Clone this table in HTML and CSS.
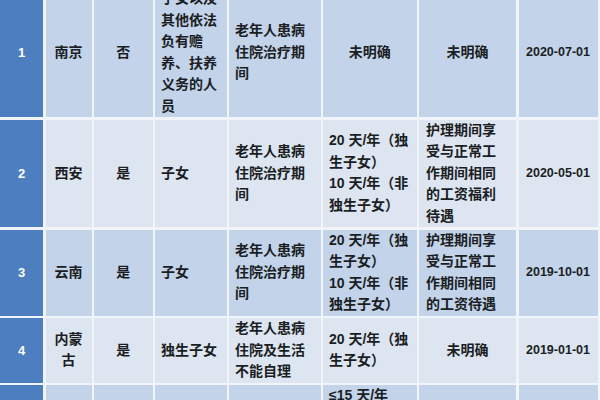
FILE: index.html
```html
<!DOCTYPE html>
<html lang="zh-CN">
<head>
<meta charset="utf-8">
<title>各地护理假规定</title>
<link rel="stylesheet" href="styles.css">
</head>
<body>
<div class="sheet">
  <div class="table">
    <div class="row odd">
      <div class="cell num">1</div>
      <div class="cell center">南京</div>
      <div class="cell center">否</div>
      <div class="cell left">子女以及<br>其他依法<br>负有赡<br>养、扶养<br>义务的人<br>员</div>
      <div class="cell left">老年人患病<br>住院治疗期<br>间</div>
      <div class="cell center">未明确</div>
      <div class="cell center">未明确</div>
      <div class="cell center date">2020-07-01</div>
    </div>
    <div class="row even">
      <div class="cell num">2</div>
      <div class="cell center">西安</div>
      <div class="cell center">是</div>
      <div class="cell left">子女</div>
      <div class="cell left">老年人患病<br>住院治疗期<br>间</div>
      <div class="cell left">20 天/年（独<br>生子女）<br>10 天/年（非<br>独生子女）</div>
      <div class="cell left wide">护理期间享<br>受与正常工<br>作期间相同<br>的工资福利<br>待遇</div>
      <div class="cell center date">2020-05-01</div>
    </div>
    <div class="row odd">
      <div class="cell num">3</div>
      <div class="cell center">云南</div>
      <div class="cell center">是</div>
      <div class="cell left">子女</div>
      <div class="cell left">老年人患病<br>住院治疗期<br>间</div>
      <div class="cell left">20 天/年（独<br>生子女）<br>10 天/年（非<br>独生子女）</div>
      <div class="cell left wide">护理期间享<br>受与正常工<br>作期间相同<br>的工资待遇</div>
      <div class="cell center date">2019-10-01</div>
    </div>
    <div class="row even">
      <div class="cell num">4</div>
      <div class="cell center">内蒙<br>古</div>
      <div class="cell center">是</div>
      <div class="cell left">独生子女</div>
      <div class="cell left">老年人患病<br>住院及生活<br>不能自理</div>
      <div class="cell left">20 天/年（独<br>生子女）</div>
      <div class="cell center">未明确</div>
      <div class="cell center date">2019-01-01</div>
    </div>
    <div class="row odd tall">
      <div class="cell num"></div>
      <div class="cell center"></div>
      <div class="cell center"></div>
      <div class="cell left"></div>
      <div class="cell left"></div>
      <div class="cell left top">≤15 天/年</div>
      <div class="cell left wide"></div>
      <div class="cell center date"></div>
    </div>
  </div>
</div>
</body>
</html>
```

FILE: styles.css
```css
html, body {
  margin: 0;
  padding: 0;
  background: #f1f4f9;
}

.sheet {
  width: 600px;
  height: 400px;
  overflow: hidden;
}

.table {
  display: grid;
  grid-template-columns: 43px 46px 58.5px 71.5px 91.5px 93.5px 97px 79px;
  grid-auto-rows: auto;
  gap: 2.5px;
  width: 597.5px;
  margin-top: -12px;
  background: #f1f4f9;
  font-family: "Liberation Sans", "Noto Sans CJK SC", sans-serif;
  font-size: 14px;
  font-weight: 700;
  line-height: 21.5px;
  color: #1b1e23;
}

.row {
  display: contents;
}

.cell {
  display: flex;
  align-items: center;
  padding: 0 6px;
}

.row.tall .cell {
  min-height: 86px;
}

.cell.top {
  align-items: flex-start;
}

.row.odd .cell {
  background: #c2d3ea;
}

.row.even .cell {
  background: #dde5f1;
}

.row .cell.num {
  background: #4d7fc0;
  color: #ffffff;
  justify-content: center;
  font-size: 13px;
  padding: 0;
}

.center {
  justify-content: center;
  text-align: center;
}

.left {
  justify-content: flex-start;
  text-align: left;
}

.wide {
  padding-left: 7px;
}

.date {
  font-size: 12.5px;
  padding: 0;
}
```
